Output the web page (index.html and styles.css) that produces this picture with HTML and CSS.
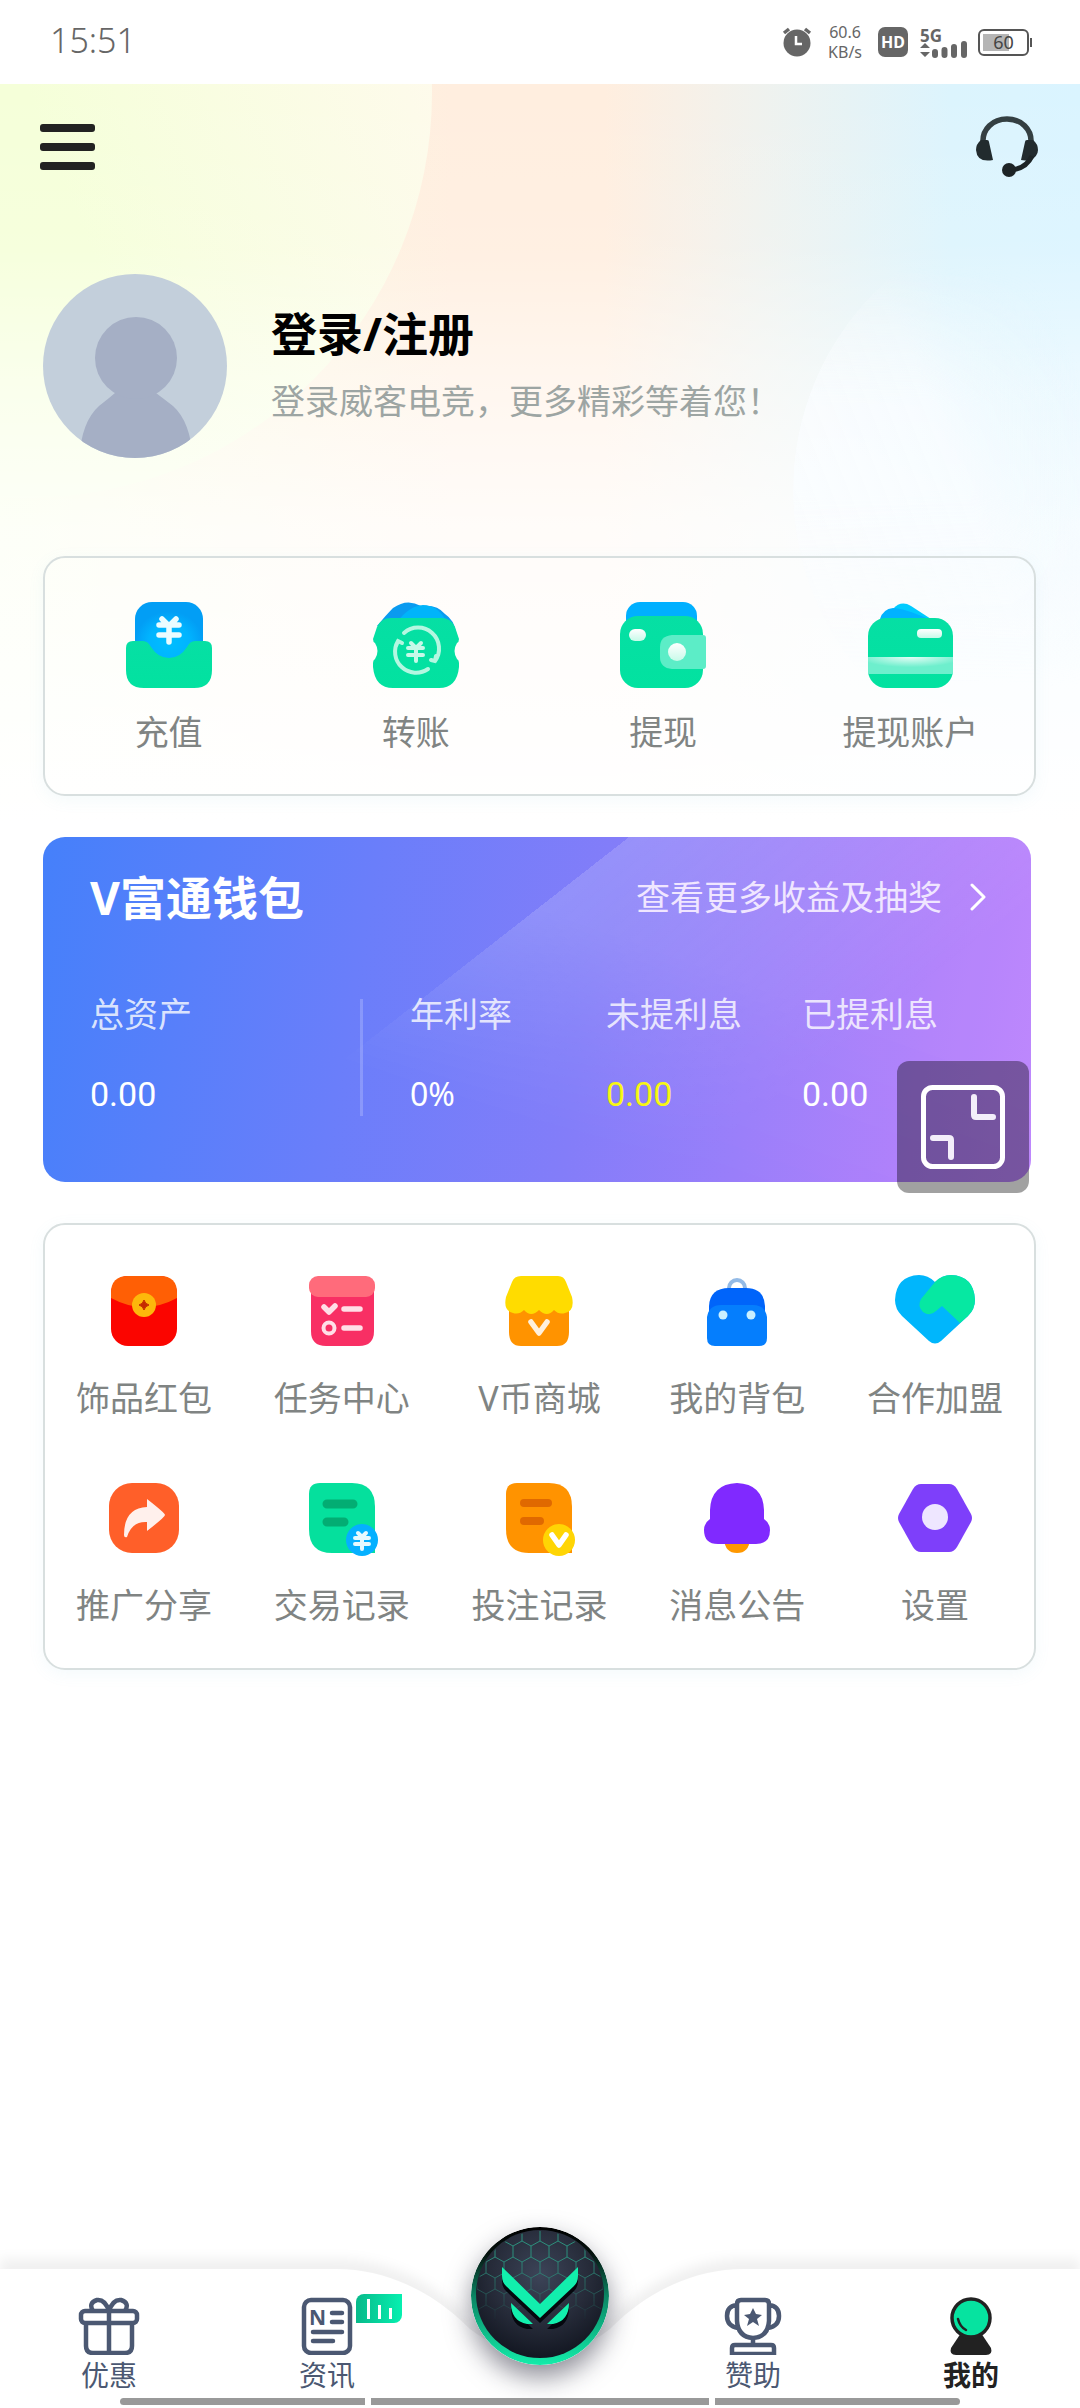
FILE: index.html
```html
<!DOCTYPE html>
<html lang="zh-CN">
<head>
<meta charset="utf-8">
<title>我的</title>
<meta name="viewport" content="width=device-width, initial-scale=1.0">
<link rel="stylesheet" href="styles.css">
</head>
<body>

	<div class="statusbar">
		<span class="time">15:51</span>
		<svg class="alarm" width="30" height="30" viewBox="0 0 30 30">
			<circle cx="15" cy="16" r="13.5" fill="#666"/>
			<path d="M2 6 7 2M28 6 23 2" stroke="#666" stroke-width="3.5"/>
			<path d="M14 9v8h6" fill="none" stroke="#fff" stroke-width="2.5"/>
		</svg>
		<span class="speed">60.6<br>KB/s</span>
		<span class="hd">HD</span>
		<svg class="signal" width="48" height="36" viewBox="0 0 48 36">
			<text x="0" y="18" font-size="17" font-weight="700" fill="#666">5G</text>
			<path d="M5 19l5 5H0zM5 33l5-5H0z" fill="#666"/>
			<path d="M15 28v3M24.500 26v5M34 23v8M44 20v11" stroke="#666" stroke-width="6" stroke-linecap="round"/>
		</svg>
		<span class="battery"><b>60</b></span>
	</div>

	<div class="page">
		<svg class="backdrop" viewBox="0 0 1080 740" preserveAspectRatio="none">
			<defs>
				<linearGradient id="sky" x1="0" x2="1" y1="0" y2="0">
					<stop offset="0" stop-color="#f5ffd6"/>
					<stop offset=".28" stop-color="#fdf3de"/>
					<stop offset=".42" stop-color="#ffeedf"/>
					<stop offset=".56" stop-color="#ffeedf"/>
					<stop offset=".7" stop-color="#f0f2ee"/>
					<stop offset=".88" stop-color="#dcf4fd"/>
					<stop offset="1" stop-color="#daf4ff"/>
				</linearGradient>
				<linearGradient id="fade" x1="0" x2="0" y1="0" y2="1">
					<stop offset="0" stop-color="#fff" stop-opacity="0"/>
					<stop offset=".22" stop-color="#fff" stop-opacity=".1"/>
					<stop offset=".4" stop-color="#fff" stop-opacity=".5"/>
					<stop offset=".6" stop-color="#fff" stop-opacity=".82"/>
					<stop offset="1" stop-color="#fff"/>
				</linearGradient>
				<linearGradient id="lime" x1="0" x2="1" y1=".7" y2=".3">
					<stop offset=".5" stop-color="#f5ffd9"/>
					<stop offset="1" stop-color="#fffaee"/>
				</linearGradient>
				<linearGradient id="glass" x1="0" x2="1" y1=".75" y2=".35">
					<stop offset="0" stop-color="#fbfdff" stop-opacity=".85"/>
					<stop offset=".35" stop-color="#f8fcff" stop-opacity=".8"/>
					<stop offset=".6" stop-color="#e8f8ff" stop-opacity="0"/>
				</linearGradient>
				<linearGradient id="edges" x1="0" x2="0" y1="0" y2="1">
					<stop offset=".1" stop-color="#000"/>
					<stop offset=".35" stop-color="#fff"/>
					<stop offset=".5" stop-color="#fff"/>
					<stop offset=".85" stop-color="#000"/>
				</linearGradient>
				<mask id="soft"><circle cx="1074" cy="406" r="281" fill="url(#edges)"/></mask>
			</defs>
			<rect width="1080" height="740" fill="url(#sky)"/>
			<circle cx="27" cy="9" r="405" fill="url(#lime)"/>
			<rect width="1080" height="740" fill="url(#fade)"/>
			<circle cx="1074" cy="406" r="281" fill="url(#glass)" mask="url(#soft)"/>
		</svg>

		<div class="topbar">
			<button class="menu" aria-label="菜单"><i></i><i></i><i></i></button>
			<button class="service" aria-label="客服">
				<svg width="62" height="62" viewBox="0 0 62 62">
					<path d="M7 27C6 13 17 3 31 3s25 10 24 24" fill="none" stroke="#343f42" stroke-width="5.500"/>
					<path d="M5 24h6q2 0 2 2l4 18q-16 3-17-10 0-6 5-10zM57 24h-6q-2 0-2 2l-4 18 8 1q9-4 9-11 0-6-5-10z" fill="#222b2e"/>
					<path d="M56 40Q50 53 34 54" fill="none" stroke="#1d2426" stroke-width="5"/>
					<circle cx="33" cy="54" r="7" fill="#1d2426"/>
				</svg>
			</button>
		</div>

		<div class="profile">
			<svg class="avatar" width="185" height="185" viewBox="0 0 185 185">
				<clipPath id="round"><circle cx="92" cy="92" r="92"/></clipPath>
				<g clip-path="url(#round)">
					<rect width="185" height="185" fill="#c3cfdb"/>
					<path d="M72 119h41q8 6 17 13 18 16 20 55H36q2-39 20-55 9-7 16-13z" fill="#a5afc5"/>
					<circle cx="93" cy="84" r="41" fill="#a5afc5"/>
				</g>
			</svg>
			<div class="intro">
				<a href="#" class="login">登录/注册</a>
				<p>登录威客电竞，更多精彩等着您！</p>
			</div>
		</div>

		<div class="card funds">
			<a href="#" class="item">
				<svg width="86" height="86" viewBox="0 0 86 86">
					<defs>
						<radialGradient id="blue" cy=".65"><stop offset="0" stop-color="#00beff"/><stop offset=".6" stop-color="#00b4ff"/><stop offset="1" stop-color="#029ef5"/></radialGradient>
						<linearGradient id="green" x2="0" y2="1"><stop offset="0" stop-color="#06dfa4"/><stop offset="1" stop-color="#02e2a0"/></linearGradient>
						<linearGradient id="milk" x2="0" y2="1"><stop offset="0" stop-color="#fff"/><stop offset="1" stop-color="#c8fae9"/></linearGradient>
					</defs>
					<rect x="9" width="68" height="62" rx="17" fill="url(#blue)"/>
					<path d="M0 46q0-7 7-7h10q5 0 8 6 7 11 18 11t18-11q3-6 8-6h10q7 0 7 7v22q0 18-18 18H18Q0 86 0 68z" fill="url(#green)"/>
					<path d="M36 17l7 7 7-7M33 23h20M33 33h20M43 24v16" fill="none" stroke="#eafcff" stroke-width="5.500" stroke-linecap="round" stroke-linejoin="round"/>
				</svg>
				<span>充值</span>
			</a>
			<a href="#" class="item">
				<svg width="86" height="86" viewBox="0 0 86 86">
					<path d="M4 24Q14 12 20 6q14-10 28-2 16-2 24 8 9 6 11 18z" fill="#0a9bf0"/>
					<path d="M24 20Q36 4 50 3q14 0 22 14z" fill="#00b4fa"/>
					<path d="M18 16h50q10 0 14 9l4 12q0 3-2 4-5 8 0 16 2 1 2 4v4q-2 21-20 21H20Q2 86 0 65v-4q0-3 2-4 5-8 0-16-2-1-2-4l4-12q4-9 14-9z" fill="url(#green)"/>
					<path d="M31 31a21 21 0 0 1 31 28l-4-1M62 59l1-5M55 67A21 21 0 0 1 25 39l4 2M25 39l-2 5" fill="none" stroke="#b4f7e1" stroke-width="4" stroke-linecap="round"/>
					<path d="M38 41l5 5 5-5M35 46h15M35 53h15M43 46v13" fill="none" stroke="#c6f9e9" stroke-width="4" stroke-linecap="round"/>
				</svg>
				<span>转账</span>
			</a>
			<a href="#" class="item">
				<svg width="86" height="86" viewBox="0 0 86 86">
					<rect x="6" width="71" height="40" rx="14" fill="#00b0ff"/>
					<rect y="14" width="83" height="72" rx="18" fill="url(#green)"/>
					<rect x="9" y="27" width="17" height="12" rx="6" fill="url(#milk)"/>
					<path d="M52 33h31q3 0 3 3v28q0 3-3 3H52q-12-1-12-12V45q0-11 12-12z" fill="#5cedc7"/>
					<circle cx="57" cy="50" r="9" fill="url(#milk)"/>
				</svg>
				<span>提现</span>
			</a>
			<a href="#" class="item">
				<svg width="86" height="86" viewBox="0 0 86 86">
					<path d="M26 7q8-9 18-3l20 13H26z" fill="#00cbff"/>
					<path d="M13 17q3-10 13-11 10 0 36 11z" fill="#00b2ff"/>
					<rect x="1" y="16" width="85" height="70" rx="18" fill="url(#green)"/>
					<rect x="50" y="27" width="25" height="9" rx="4" fill="url(#milk)"/>
					<radialGradient id="stripe" cy="0" r=".6"><stop offset="0" stop-color="#e6fdf6"/><stop offset="1" stop-color="#6eefcd"/></radialGradient>
					<path d="M1 55h85v17H1z" fill="url(#stripe)"/>
				</svg>
				<span>提现账户</span>
			</a>
		</div>

		<div class="wallet">
			<div class="wallet-head">
				<h2>V富通钱包</h2>
				<a href="#">查看更多收益及抽奖
					<svg width="16" height="28" viewBox="0 0 16 28"><path d="M2 2l12 12L2 26" fill="none" stroke="#fff" stroke-width="3" stroke-linecap="round" stroke-linejoin="round"/></svg>
				</a>
			</div>
			<div class="stats">
				<div class="stat total"><span>总资产</span><b>0.00</b></div>
				<div class="stat"><span>年利率</span><b class="rate">0%</b></div>
				<div class="stat"><span>未提利息</span><b class="pending">0.00</b></div>
				<div class="stat"><span>已提利息</span><b>0.00</b></div>
			</div>
			<button class="shrink" aria-label="缩小">
				<svg width="84" height="84" viewBox="0 0 84 84" fill="none" stroke="#fff">
					<rect x="2.500" y="2.500" width="79" height="79" rx="9" stroke-width="5"/>
					<path d="M53 12v18q0 2 2 2h17M12 53h16q2 0 2 2v17" stroke="#f3eefa" stroke-width="6" stroke-linecap="round"/>
				</svg>
			</button>
		</div>

		<div class="card services">
			<a href="#" class="item">
				<svg width="80" height="80" viewBox="0 0 80 80">
					<rect x="7" y="4" width="66" height="70" rx="17" fill="#fb0500"/>
					<path d="M7 26V21Q7 4 24 4h32q17 0 17 17v5Q40 44 7 26z" fill="#ff5f05"/>
					<circle cx="40" cy="33" r="12" fill="#fdb80b"/>
					<path d="M40 28q1 4 5 5-4 1-5 5-1-4-5-5 4-1 5-5z" fill="#c42a00" stroke="#c42a00"/>
				</svg>
				<span>饰品红包</span>
			</a>
			<a href="#" class="item">
				<svg width="80" height="80" viewBox="0 0 80 80">
					<path d="M9 14h63v45q0 15-15 15H24Q9 74 9 59z" fill="#f82f64"/>
					<rect x="7" y="4" width="66" height="21" rx="9" fill="#ff6b7b"/>
					<path d="M22 35l5 5 6-6M42 37h16M42 56h16" fill="none" stroke="#ffdfe7" stroke-width="5.500" stroke-linecap="round" stroke-linejoin="round"/>
					<circle cx="27" cy="56" r="5.500" fill="none" stroke="#ffdfe7" stroke-width="4"/>
				</svg>
				<span>任务中心</span>
			</a>
			<a href="#" class="item">
				<svg width="80" height="80" viewBox="0 0 80 80">
					<path d="M10 30h60v30q0 14-12 14H22q-12 0-12-14z" fill="#ff9300"/>
					<path d="M22 4h37q6 0 8 6l6 15q3 14-7 16-6 2-11-3-7 8-15 0-8 8-15 0-5 5-11 3Q4 39 7 25l6-15q2-6 9-6z" fill="#ffdc00"/>
					<path d="M32 50l8 11 8-11" fill="none" stroke="#fff0dc" stroke-width="5.500" stroke-linecap="round" stroke-linejoin="round"/>
				</svg>
				<span>V币商城</span>
			</a>
			<a href="#" class="item">
				<svg width="80" height="80" viewBox="0 0 80 80">
					<circle cx="40" cy="16" r="8" fill="none" stroke="#93bae6" stroke-width="4"/>
					<path d="M12 44V34q1-18 20-18h17q18 0 19 18v10z" fill="#0064fa"/>
					<path d="M10 45q2-12 14-12h32q12 0 14 12v21q0 8-8 8H18q-8 0-8-8z" fill="#057efd"/>
					<circle cx="26" cy="43" r="4.500" fill="#c9f0ff"/>
					<circle cx="54" cy="43" r="4.500" fill="#c9f0ff"/>
				</svg>
				<span>我的背包</span>
			</a>
			<a href="#" class="item">
				<svg width="80" height="80" viewBox="0 0 80 80">
					<path d="M40 10Q33 3 24 3 1 4 0 28q0 9 7 16l27 25q6 5 12 0l27-25q7-7 7-16Q79 4 56 3q-9 0-16 7z" fill="#00b6fc"/>
					<path d="M40 10Q47 3 56 3q23 1 24 25 0 9-7 16l-8 7-18-17-6 5q-6 6-13 1-6-6-2-13z" fill="#06e8a2"/>
				</svg>
				<span>合作加盟</span>
			</a>
			<a href="#" class="item">
				<svg width="80" height="80" viewBox="0 0 80 80">
					<rect x="5" y="4" width="70" height="70" rx="23" fill="#ff5f29"/>
					<path d="M43 20q18 14 18 16T43 52v-9q-15-1-20 15-3 1-3-2 0-27 23-28z" fill="#fff0ec"/>
				</svg>
				<span>推广分享</span>
			</a>
			<a href="#" class="item">
				<svg width="80" height="80" viewBox="0 0 80 80">
					<path d="M18 4h32q23 0 23 24v46H30Q7 74 7 50V15Q7 4 18 4z" fill="#05e09d"/>
					<path d="M25 25h26M25 43h17" stroke="#03ad73" stroke-width="9" stroke-linecap="round"/>
					<circle cx="60" cy="61" r="16" fill="#05b0ff"/>
					<path d="M56 54l4 4 4-4M53 59h14M53 65h14M60 59v11" fill="none" stroke="#e6faff" stroke-width="4" stroke-linecap="round"/>
				</svg>
				<span>交易记录</span>
			</a>
			<a href="#" class="item">
				<svg width="80" height="80" viewBox="0 0 80 80">
					<path d="M18 4h32q23 0 23 24v46H30Q7 74 7 50V15Q7 4 18 4z" fill="#ff9300"/>
					<path d="M25 24h24M25 42h16" stroke="#e06900" stroke-width="8" stroke-linecap="round"/>
					<circle cx="60" cy="61" r="16" fill="#ffd504"/>
					<path d="M53 56l7 10 7-10" fill="none" stroke="#fff" stroke-width="5.500" stroke-linecap="round" stroke-linejoin="round"/>
				</svg>
				<span>投注记录</span>
			</a>
			<a href="#" class="item">
				<svg width="80" height="80" viewBox="0 0 80 80">
					<path d="M27 60h26q-1 14-13 14T27 60z" fill="#ff9800"/>
					<path d="M13 31Q14 5 40 4q26 1 27 27v9q6 4 6 11 0 14-14 14H21Q7 65 7 51q0-7 6-11z" fill="#8029ff"/>
				</svg>
				<span>消息公告</span>
			</a>
			<a href="#" class="item">
				<svg width="80" height="80" viewBox="0 0 80 80">
					<path d="M26 5h28q5 0 8 5l14 25q2 4 0 8L62 68q-3 5-8 5H26q-5 0-8-5L4 43q-2-4 0-8l14-25q3-5 8-5z" fill="#7e3ffa"/>
					<circle cx="40" cy="38" r="13" fill="#eee6ff"/>
				</svg>
				<span>设置</span>
			</a>
		</div>
	</div>

	<nav class="tabbar">
		<svg class="tabbar-bg" viewBox="0 0 1080 139" preserveAspectRatio="none">
			<path d="M0 0H335C400 0 445 35 470 60 510 92 570 92 610 60 635 35 680 0 745 0H1080V139H0z" fill="#fff"/>
		</svg>
		<a href="#" class="tab">
			<svg width="62" height="58" viewBox="0 0 62 58" fill="none" stroke="#4b5872" stroke-width="4.500">
				<rect x="3" y="14" width="56" height="12" rx="4"/>
				<path d="M8 26v23q0 7 7 7h32q7 0 7-7V26M31 14v42M31 14Q27 2 19 3q-9 3-4 11M31 14Q35 2 43 3q9 3 4 11"/>
			</svg>
			<span>优惠</span>
		</a>
		<a href="#" class="tab">
			<svg width="62" height="58" viewBox="0 0 62 58" fill="none" stroke="#4b5872" stroke-width="4.500" stroke-linecap="round">
				<rect x="8" y="3" width="46" height="53" rx="7"/>
				<text x="13" y="28" font-size="21" font-weight="700" fill="#4b5872" stroke="none">N</text>
				<path d="M36 16h10M36 25h10M17 35h29M17 44h20"/>
			</svg>
			<em class="badge"><i></i><i></i><i></i></em>
			<span>资讯</span>
		</a>
		<a href="#" class="tab home" aria-label="首页">
			<svg width="138" height="138" viewBox="0 0 138 138">
				<defs>
					<linearGradient id="rim" x2="0" y2="1"><stop offset="0" stop-color="#000"/><stop offset=".2" stop-color="#06130f"/><stop offset=".5" stop-color="#0a8563"/><stop offset="1" stop-color="#14ecaa"/></linearGradient>
					<radialGradient id="disc" cy=".35" r=".65"><stop offset="0" stop-color="#3c4458"/><stop offset=".6" stop-color="#262b39"/><stop offset="1" stop-color="#131722"/></radialGradient>
					<linearGradient id="dim" x2="0" y2="1"><stop offset=".2" stop-color="#fff"/><stop offset=".68" stop-color="#000"/></linearGradient>
					<pattern id="hex" width="18" height="32" patternUnits="userSpaceOnUse" x="60" y="9">
						<path d="M9 0v5l9 5v11l-9 5v6M9 5L0 10v11l9 5" fill="none" stroke="#2c8f7c" stroke-width="1"/>
					</pattern>
					<mask id="top"><rect width="138" height="138" fill="url(#dim)"/></mask>
				</defs>
				<circle cx="69" cy="69" r="69" fill="url(#rim)"/>
				<circle cx="69" cy="67" r="64" fill="url(#disc)"/>
				<circle cx="69" cy="67" r="63" fill="url(#hex)" mask="url(#top)"/>
				<g fill="#05080e" transform="translate(0 5)">
					<path d="M31 40l38 37 38-37v9q0 6-4 10L69 91 35 59q-4-4-4-10z"/>
					<path d="M40 76l22 21h-6Q40 94 40 76zM98 76L76 97h6q16-3 16-21z"/>
				</g>
				<g fill="#12efad">
					<path d="M31 40l38 37 38-37v9q0 6-4 10L69 91 35 59q-4-4-4-10z"/>
					<path d="M40 76l22 21h-6Q40 94 40 76zM98 76L76 97h6q16-3 16-21z"/>
				</g>
			</svg>
		</a>
		<a href="#" class="tab">
			<svg width="62" height="58" viewBox="0 0 62 58" fill="none" stroke="#4b5872" stroke-width="4.500">
				<path d="M19 3h24q4 0 4 4v17q-1 16-16 17-15-1-16-17V7q0-4 4-4zM15 8Q5 9 5 19t11 12M47 8q10 1 10 11T46 31M31 41v7M10 57v-6q0-3 3-3h36q3 0 3 3v6z"/>
				<path d="M31 11l3 6 6 1-5 4 2 7-6-4-6 4 2-7-5-4 6-1z" fill="#4b5872" stroke="none"/>
			</svg>
			<span>赞助</span>
		</a>
		<a href="#" class="tab active">
			<svg width="62" height="58" viewBox="0 0 62 58">
				<path d="M21 36h20l10 15q2 7-5 7H16q-7 0-5-7z" fill="#222"/>
				<circle cx="31" cy="21" r="19" fill="#06e3a0" stroke="#222" stroke-width="3.500"/>
				<path d="M18 22q2 8 8 11" fill="none" stroke="#222" stroke-width="2.500" stroke-linecap="round"/>
			</svg>
			<span>我的</span>
		</a>
		<div class="gesture"><i></i><i></i><i></i></div>
	</nav>

</body>
</html>
```
FILE: styles.css
```css
*{
	box-sizing:border-box;
}

body{
	margin:0;
	min-height:100vh;
	display:flex;
	flex-direction:column;
	background-color:white;
	font-family:"Noto Sans", "Noto Sans CJK SC", sans-serif;
	font-size:34px;
	line-height:44px;
	color:#808483;
}

a{
	color:inherit;
	text-decoration:none;
}

button{
	padding:0;
	border:0;
	background:none;
}

svg{
	display:block;
	flex:none;
}

/* phone status bar */

.statusbar{
	display:flex;
	align-items:center;
	height:84px;
	padding:0 48px 0 50px;
	color:#666;
}

.time{
	font-size:34px;
	font-weight:300;
	line-height:40px;
	margin:0 auto 4px 0;
}

.speed{
	margin:0 16px;
	font-size:16px;
	line-height:20px;
	text-align:center;
}

.hd{
	width:30px;
	border-radius:7px;
	background-color:#666;
	color:white;
	font-size:16px;
	font-weight:700;
	line-height:30px;
	text-align:center;
}

.signal{
	margin:0 10px 0 12px;
}

.battery{
	position:relative;
	width:51px;
	height:27px;
	margin-right:3px;
	border:2px solid #555;
	border-radius:6px;
	background:linear-gradient(to right, #b5b5b5 26px, white 26px) 3px 3px / 42px 17px no-repeat;
	color:#444;
	font-size:18px;
	line-height:23px;
	text-align:center;
}

.battery b{
	font-weight:400;
}

.battery:after{
	content:"";
	position:absolute;
	right:-5px;
	top:7px;
	width:2px;
	height:9px;
	background-color:#555;
}

/* page */

.page{
	position:relative;
	flex:1;
	padding:0 44px 60px 43px;
}

.backdrop{
	position:absolute;
	left:0;
	top:0;
	width:100%;
	height:740px;
	z-index:-1;
}

.topbar{
	display:flex;
	justify-content:space-between;
	align-items:center;
	height:126px;
	margin:0 -2px 0 -3px;
}

.menu i{
	display:block;
	width:55px;
	height:8px;
	border-radius:3px;
	background-color:#222;
}

.menu i + i{
	margin-top:11px;
}

.profile{
	display:flex;
	align-items:center;
	gap:43px;
	margin:64px 0 97px;
}

.intro{
	padding-bottom:8px;
}

.login{
	display:block;
	font-size:46px;
	font-weight:700;
	line-height:60px;
	color:black;
}

.profile p{
	margin:16px 0 0;
	color:#9da5a3;
}

.card{
	display:grid;
	border:2px solid #d8dfdf;
	border-radius:22px;
	box-shadow:0 4px 16px rgba(120,190,220,.08);
}

.item{
	display:flex;
	flex-direction:column;
	align-items:center;
	white-space:nowrap;
}

.funds{
	grid-template-columns:repeat(4, 1fr);
	padding:44px 0 40px;
}

.funds .item{
	gap:22px;
}

.services{
	grid-template-columns:repeat(5, 1fr);
	row-gap:59px;
	padding:47px 0 41px;
}

.services .item{
	gap:24px;
}

/* wallet */

.wallet{
	position:relative;
	isolation:isolate;
	margin:41px 5px 41px 0;
	padding:30px 33px 66px 47px;
	border-radius:22px;
	background:linear-gradient(100deg, #4580fa, #6a7efa 32%, #837df9 55%, #b07ffb 88%, #bd84fd);
	color:white;
}

/* diagonal light band, gone before it reaches the lower left */
.wallet:before{
	content:"";
	position:absolute;
	inset:0;
	z-index:-1;
	border-radius:22px;
	background:linear-gradient(142deg, transparent 41%, rgba(255,255,255,.16) 41%, rgba(255,255,255,.04) 75%);
	-webkit-mask-image:linear-gradient(to bottom left, black 35%, transparent 68%);
	mask-image:linear-gradient(to bottom left, black 35%, transparent 68%);
}

.wallet-head{
	display:flex;
	justify-content:space-between;
	align-items:center;
	padding-right:12px;
}

.wallet h2{
	margin:0;
	font-size:46px;
	line-height:60px;
}

.wallet-head a{
	display:flex;
	align-items:center;
	gap:28px;
	color:#f0e6ff;
}

.stats{
	display:grid;
	grid-template-columns:320px repeat(3, 1fr);
	margin-top:65px;
}

.stat span{
	display:block;
	color:rgba(255,255,255,.8);
}

.stat b{
	display:block;
	margin-top:36px;
	font-family:Roboto, sans-serif;
	font-weight:400;
}

.stat b.rate{
	font-family:"Noto Sans", sans-serif;
	font-size:32px;
}

.stat b.pending{
	color:#f8f613;
}

.total{
	margin-right:47px;
	background:linear-gradient(rgba(255,255,255,.2), rgba(255,255,255,.2)) right bottom / 3px 117px no-repeat;
}

.shrink{
	position:absolute;
	right:2px;
	bottom:-11px;
	padding:24px;
	border-radius:12px;
	background-color:rgba(0,0,0,.37);
}

/* bottom tabs */

.tabbar{
	position:relative;
	display:grid;
	grid-template-columns:218fr 218fr 208fr 218fr 218fr;
	height:139px;
	padding-top:28px;
	font-size:28px;
	line-height:30px;
	color:#4b5872;
}

.tabbar-bg{
	position:absolute;
	left:0;
	top:0;
	width:100%;
	height:139px;
	z-index:-1;
	filter:drop-shadow(0 -10px 6px rgba(0,0,0,.06));
}

.tab{
	position:relative;
	display:flex;
	flex-direction:column;
	align-items:center;
	gap:5px;
}

.tab.active{
	color:#222;
	font-weight:700;
}

.home svg{
	position:absolute;
	top:-70px;
	border-radius:50%;
	box-shadow:0 12px 26px rgba(30,30,50,.5);
}

.badge{
	position:absolute;
	left:50%;
	top:-3px;
	display:flex;
	align-items:flex-end;
	justify-content:center;
	gap:8px;
	width:46px;
	height:29px;
	margin-left:29px;
	padding-bottom:4px;
	border-radius:8px 0;
	background:linear-gradient(to right, #08b98a, #06f0b0);
}

.badge i{
	width:3px;
	height:11px;
	background-color:white;
}

.badge i:first-child{
	height:20px;
}

.badge i:nth-child(2){
	height:14px;
}

.gesture{
	position:absolute;
	left:0;
	right:0;
	bottom:3px;
	display:flex;
	gap:6px;
	padding:0 120px;
}

.gesture i{
	flex:246;
	height:7px;
	background-color:#999;
}

.gesture i:nth-child(2){
	flex:338;
}

.gesture i:first-child{
	border-radius:4px 0 0 4px;
}

.gesture i:last-child{
	border-radius:0 4px 4px 0;
}
```
